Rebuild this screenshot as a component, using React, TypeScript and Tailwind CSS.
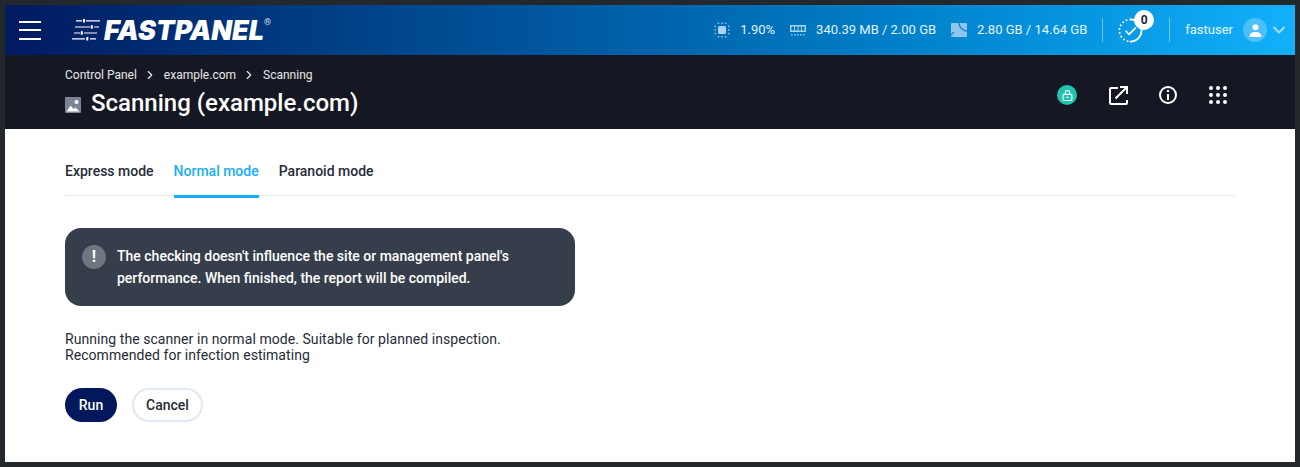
import React from "react";
import { ChevronRight, ChevronDown } from "lucide-react";

const CpuIcon = () => (
  <svg width="16" height="16" viewBox="0 0 16 16" fill="#a9d3f0">
    <rect x="4" y="4" width="8" height="8" rx="1.5" />
    {[3.6, 7.2, 10.8].map((p) => (
      <React.Fragment key={p}>
        <rect x={p} y="0.5" width="1.6" height="1.6" opacity="0.8" />
        <rect x={p} y="13.9" width="1.6" height="1.6" opacity="0.8" />
        <rect x="0.5" y={p} width="1.6" height="1.6" opacity="0.8" />
        <rect x="13.9" y={p} width="1.6" height="1.6" opacity="0.8" />
      </React.Fragment>
    ))}
  </svg>
);

const RamIcon = () => (
  <svg width="16" height="11" viewBox="0 0 16 11" fill="#a9d3f0">
    <path d="M0 0h16v7H0zM1.500 1.500v4h2.500v-4zM5 1.500v4h2.500v-4zM8.500 1.500v4h2.500v-4zM12 1.500v4h2.500v-4z" fillRule="evenodd" />
    {[2, 5, 8, 11, 14].map((x) => (
      <rect key={x} x={x - 1} y="9" width="1.6" height="1.6" opacity="0.8" />
    ))}
  </svg>
);

const DiskIcon = () => (
  <svg width="16" height="14" viewBox="0 0 16 14">
    <path d="M1 0h14a1 1 0 0 1 1 1v12a1 1 0 0 1-1 1H1a1 1 0 0 1-1-1V1a1 1 0 0 1 1-1z" fill="#8ec6ee" />
    <path d="M8 0c0 4 4 8 8 8" fill="none" stroke="#1580c8" strokeWidth="1.4" />
    <path d="M0 12l3-3" stroke="#1580c8" strokeWidth="1.2" />
  </svg>
);

const Logo = () => (
  <div className="flex items-center">
    <svg width="28" height="24" viewBox="0 0 28 24" fill="white" className="mr-[4px]">
      <path d="M4 2.200h6v1.200H4zM14 2.200h14v1.200H14z" />
      <rect x="11" y="1" width="2" height="3.500" />
      <path d="M3 8.400h15v1.200H3zM22 8.400h5v1.200h-5z" />
      <rect x="18.800" y="7.200" width="2" height="3.500" />
      <path d="M2 14.400h6v1.200H2zM12 14.400h13v1.200H12z" />
      <rect x="8.800" y="13.200" width="2" height="3.500" />
      <path d="M0 20.200h13v1.200H0zM18 20.200h6v1.200h-6z" />
      <rect x="14.300" y="19" width="2" height="3.500" />
    </svg>
    <span className="text-[27px] leading-none font-black italic tracking-[0px] text-white font-['Inter',sans-serif]">FASTPANEL</span>
    <span className="text-[9px] leading-none text-white/80 self-start mt-[1px]">®</span>
  </div>
);

const TaskIcon = () => (
  <svg width="25" height="25" viewBox="0 0 26 26" fill="none" stroke="white">
    <path d="M13 1.500a11.500 11.500 0 0 1 0 23" strokeWidth="1.800" strokeLinecap="round" />
    <path d="M13 1.500a11.500 11.500 0 0 0-11.500 11.500a11.500 11.500 0 0 0 11.500 11.500" strokeWidth="2" strokeDasharray="0.1 4" strokeLinecap="round" />
    <path d="M8 13.500l3.500 3.500 7-7" strokeWidth="1.800" />
  </svg>
);

const AppsIcon = () => (
  <svg width="18" height="18" viewBox="0 0 18 18" fill="white">
    {[2, 9, 16].flatMap((y) =>
      [2, 9, 16].map((x) => <circle key={`${x}-${y}`} cx={x} cy={y} r="2" />)
    )}
  </svg>
);

export default function App() {
  return (
    <div className="h-[467px] bg-[#22282b] p-[5px] font-['Roboto',sans-serif] flex flex-col">
      <header className="h-[50px] shrink-0 flex items-center bg-gradient-to-r from-[#021a60] to-[#12b0fb]">
        <button className="ml-[14px] flex flex-col gap-[6.5px]">
          <span className="block w-[22px] h-[2px] bg-white" />
          <span className="block w-[22px] h-[2px] bg-white" />
          <span className="block w-[22px] h-[2px] bg-white" />
        </button>
        <div className="ml-[31px]">
          <Logo />
        </div>
        <div className="ml-auto flex items-center text-[13px] text-white/90">
          <CpuIcon />
          <span className="ml-[10px]">1.90%</span>
          <span className="ml-[15px]"><RamIcon /></span>
          <span className="ml-[10px]">340.39 MB / 2.00 GB</span>
          <span className="ml-[15px]"><DiskIcon /></span>
          <span className="ml-[10px]">2.80 GB / 14.64 GB</span>
          <div className="ml-[15px] w-px h-[24px] bg-white/40" />
          <div className="relative ml-[15px] mr-[13px] flex">
            <TaskIcon />
            <span className="absolute -top-[8px] left-[16px] w-[20px] h-[20px] rounded-full bg-white text-[#1b2533] text-[12px] font-bold flex items-center justify-center">0</span>
          </div>
          <div className="ml-[13px] w-px h-[24px] bg-white/40" />
          <span className="ml-[15px]">fastuser</span>
          <div className="ml-[10px] w-[24px] h-[24px] rounded-full bg-white/25 flex items-center justify-center">
            <svg width="13" height="13" viewBox="0 0 12 12" fill="white">
              <circle cx="6" cy="3" r="2.800" />
              <path d="M0.500 12c0-3 2-4.600 5.500-4.600S11.500 9 11.500 12z" />
            </svg>
          </div>
          <ChevronDown className="ml-[2px] mr-[6px] w-[20px] h-[20px] text-white/60" strokeWidth={2.5} />
        </div>
      </header>

      <div className="h-[74px] shrink-0 bg-[#151822] pl-[60px] pr-[68px] flex justify-between">
        <div>
          <nav className="mt-[12px] flex items-center text-[12px] leading-[16px] text-white/90">
            <span>Control Panel</span>
            <ChevronRight className="ml-[6px] mr-[7px] w-[14px] h-[14px]" />
            <span>example.com</span>
            <ChevronRight className="ml-[6px] mr-[7px] w-[14px] h-[14px]" />
            <span>Scanning</span>
          </nav>
          <div className="mt-[4px] flex items-center">
            <svg width="16" height="16" viewBox="0 0 16 16" className="mr-[10px] mt-[3px]">
              <rect width="16" height="16" rx="1" fill="#7a8598" />
              <path d="M1.500 14.500l4-6 3 3.500 2-1.500 4 4z" fill="white" />
              <circle cx="11.500" cy="5" r="2" fill="white" />
            </svg>
            <h1 className="text-[24px] leading-[32px] font-medium text-white">Scanning (example.com)</h1>
          </div>
        </div>
        <div className="flex items-center pt-[6px]">
          <div className="w-[20px] h-[20px] rounded-full bg-[#20c5b0] flex items-center justify-center">
            <svg width="11" height="11" viewBox="0 0 10 10" fill="none" stroke="white" strokeWidth="1">
              <rect x="1" y="4" width="8" height="5.500" rx="0.800" />
              <path d="M3 4V2.500a2 2 0 0 1 4 0V4" />
              <path d="M4 6.700h2" />
            </svg>
          </div>
          <svg width="19" height="19" viewBox="0 0 19 19" fill="none" stroke="white" strokeWidth="2" className="ml-[32px]">
            <path d="M9 2H2a1 1 0 0 0-1 1v14a1 1 0 0 0 1 1h15a1 1 0 0 0 1-1v-3" strokeLinejoin="round" />
            <path d="M6.500 12.500L17.500 1.500M11 1h7v7" />
          </svg>
          <svg width="18" height="18" viewBox="0 0 18 18" fill="none" stroke="white" strokeWidth="2" className="ml-[31px]">
            <circle cx="9" cy="9" r="8" />
            <path d="M9 8v6" />
            <circle cx="9" cy="5" r="1.200" fill="white" stroke="none" />
          </svg>
          <span className="ml-[32px] flex"><AppsIcon /></span>
        </div>
      </div>

      <main className="flex-1 bg-white px-[60px] text-[14px] text-[#252b39]">
        <div className="flex gap-[20px] h-[67px] border-b border-[#e4ebf3] font-medium">
          <div className="pt-[33px] leading-[19px]">Express mode</div>
          <div className="pt-[33px] leading-[19px] text-[#19aef5] border-b-[3px] border-[#12b0fb] h-[69px]">Normal mode</div>
          <div className="pt-[33px] leading-[19px]">Paranoid mode</div>
        </div>

        <div className="mt-[32px] w-[510px] h-[78px] rounded-[16px] bg-[#373e4b] flex pl-[17px] pt-[17px] text-white font-medium leading-[22px]">
          <div className="w-[24px] h-[24px] rounded-full bg-[#6f7682] flex items-center justify-center text-[16px] font-bold shrink-0">!</div>
          <p className="ml-[11px]">
            The checking doesn't influence the site or management panel's
            <br />
            performance. When finished, the report will be compiled.
          </p>
        </div>

        <p className="mt-[25px] leading-[16px] tracking-[0.06px]">
          Running the scanner in normal mode. Suitable for planned inspection.
          <br />
          Recommended for infection estimating
        </p>

        <div className="mt-[25px] flex gap-[15px] font-medium">
          <button className="h-[34px] w-[52px] rounded-full bg-[#02175c] text-white">Run</button>
          <button className="h-[34px] w-[71px] rounded-full bg-white border-2 border-[#e0e8f4]">Cancel</button>
        </div>
      </main>
    </div>
  );
}
